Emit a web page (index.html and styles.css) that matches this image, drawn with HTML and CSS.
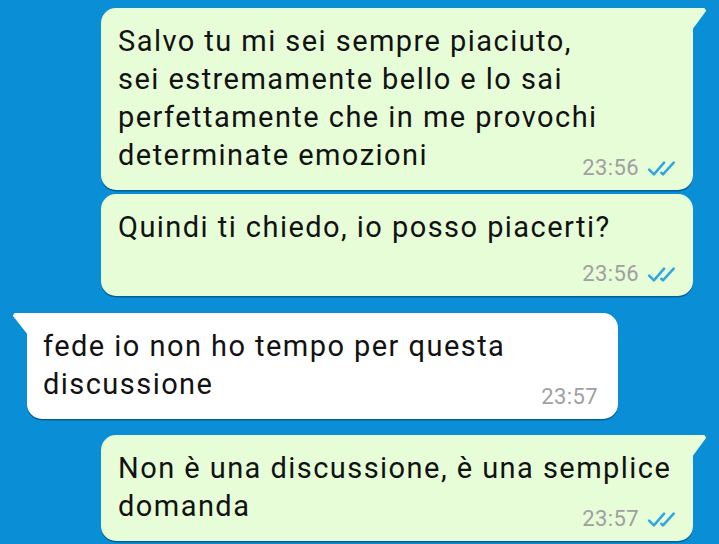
FILE: index.html
```html
<!DOCTYPE html>
<html lang="it">
<head>
<meta charset="utf-8">
<link rel="stylesheet" href="styles.css">
</head>
<body>
<div class="chat">
  <div class="bubble out tail first">
    <p class="text">Salvo tu mi sei sempre piaciuto,<br>sei estremamente bello e lo sai<br>perfettamente che in me provochi<br>determinate emozioni</p>
    <div class="meta overlap"><span class="time">23:56</span><svg class="ticks" viewBox="0 0 30 14"><path d="M2 8 L6.5 12.5 L16 1.5" /><path d="M13.5 11 L15 12.5 L25 1.5" /></svg></div>
  </div>
  <div class="bubble out second">
    <p class="text">Quindi ti chiedo, io posso piacerti?</p>
    <div class="meta below"><span class="time">23:56</span><svg class="ticks" viewBox="0 0 30 14"><path d="M2 8 L6.5 12.5 L16 1.5" /><path d="M13.5 11 L15 12.5 L25 1.5" /></svg></div>
  </div>
  <div class="bubble in tail group">
    <p class="text">fede io non ho tempo per questa<br>discussione</p>
    <div class="meta overlap"><span class="time">23:57</span></div>
  </div>
  <div class="bubble out tail group last">
    <p class="text">Non è una discussione, è una semplice<br>domanda</p>
    <div class="meta overlap"><span class="time">23:57</span><svg class="ticks" viewBox="0 0 30 14"><path d="M2 8 L6.5 12.5 L16 1.5" /><path d="M13.5 11 L15 12.5 L25 1.5" /></svg></div>
  </div>
</div>
</body>
</html>
```

FILE: styles.css
```css
html, body {
  margin: 0;
  padding: 0;
  background: #0a8fd7;
  width: 719px;
  height: 544px;
  overflow: hidden;
}

.chat {
  display: flex;
  flex-direction: column;
  padding-top: 8px;
  font-family: Roboto, "Noto Sans", sans-serif;
}

.bubble {
  position: relative;
  border-radius: 15px;
  padding: 14px 14px 10px 17px;
  box-shadow: 0 1.5px 0.5px rgba(0, 40, 60, 0.45);
}

.bubble.out {
  background: #e6fdd8;
  margin-left: 101px;
  margin-right: 26px;
}

.bubble.in {
  background: #ffffff;
  margin-left: 27px;
  margin-right: 101px;
  padding-left: 16px;
  padding-right: 20px;
}

.bubble.out.tail {
  border-top-right-radius: 0;
}

.bubble.in.tail {
  border-top-left-radius: 0;
}

.bubble.out.tail::before {
  content: "";
  position: absolute;
  top: 0;
  right: -13px;
  width: 14px;
  height: 22px;
  background: #e6fdd8;
  clip-path: polygon(0 0, 88% 0, 100% 10%, 100% 14%, 0 100%);
}

.bubble.in.tail::before {
  content: "";
  position: absolute;
  top: 0;
  left: -14px;
  width: 15px;
  height: 22px;
  background: #ffffff;
  clip-path: polygon(100% 0, 12% 0, 0 10%, 0 14%, 100% 100%);
}

.second {
  margin-top: 4px;
}

.group {
  margin-top: 17px;
}

.last {
  margin-top: 16px;
}

.text {
  margin: 0;
  font-size: 29px;
  line-height: 38px;
  color: #121212;
  letter-spacing: 1.45px;
}

.meta {
  display: flex;
  justify-content: flex-end;
  align-items: center;
  gap: 8px;
  height: 24px;
}

.meta.overlap {
  margin-top: -18px;
}

.meta.below {
  margin-top: 16px;
}

.time {
  font-size: 22px;
  line-height: 24px;
  color: #a0a0a0;
  letter-spacing: 0.4px;
}

.ticks {
  width: 32px;
  height: 15px;
  fill: none;
  stroke: #33a6e0;
  stroke-width: 2.4;
  stroke-linecap: round;
  stroke-linejoin: round;
}
```
